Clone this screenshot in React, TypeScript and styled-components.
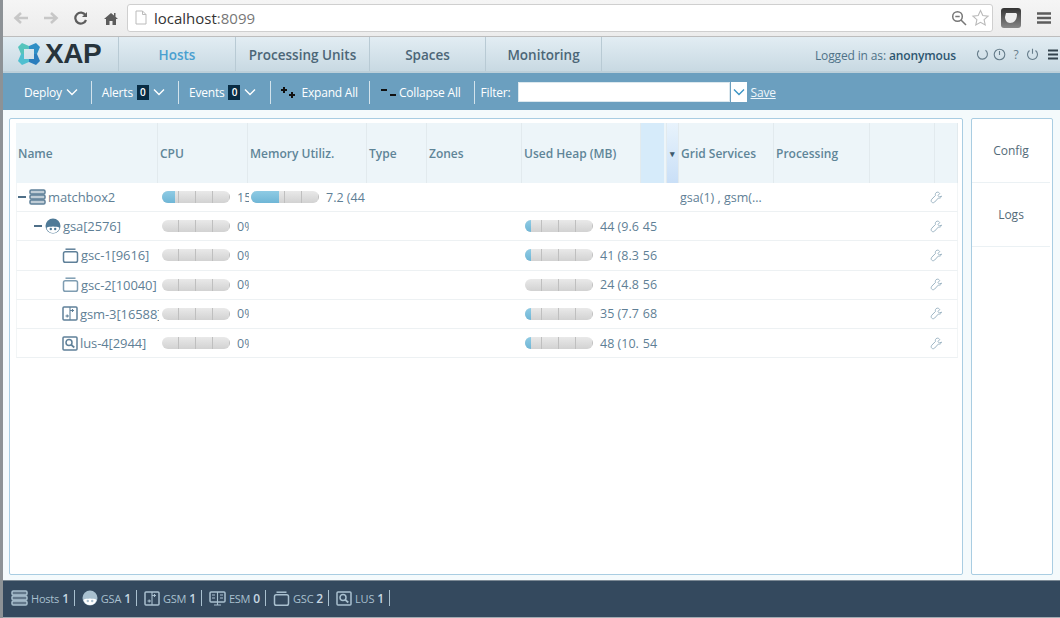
import React from "react";
import styled, { createGlobalStyle } from "styled-components";

const Global = createGlobalStyle`
  html, body { margin: 0; padding: 0; width: 1060px; height: 618px; overflow: hidden; background: #f4fafc; }
  body { font-family: "Open Sans", "Liberation Sans", sans-serif; }
  * { box-sizing: border-box; }
`;

const Page = styled.div`
  width: 1060px; height: 618px; display: flex; flex-direction: column;
  border-left: 3px solid #8d9296; background: #f4fafc; overflow: hidden;
`;

/* browser chrome */
const Chrome = styled.div`
  height: 37px; flex: none; display: flex; align-items: center; padding: 0 0 1px 10px;
  background: linear-gradient(#f5f5f5, #ececec); border-bottom: 1px solid #bdbdbd;
`;
const NavGroup = styled.div`display: flex; align-items: center; gap: 14px; width: 114px; flex: none;`;
const Address = styled.div`
  width: 866px; height: 28px; flex: none; display: flex; align-items: center; gap: 7px; padding: 0 2px 0 7px;
  background: #fff; border: 1px solid #cfcfcf; border-radius: 3px; font-size: 15px; color: #333;
`;
const Host = styled.span`flex: 1; span { color: #777; }`;
const AddressIcons = styled.div`display: flex; align-items: center; gap: 4px;`;
const ChromeRight = styled.div`display: flex; align-items: center; gap: 15px; margin-left: 8px;`;

/* app header */
const Header = styled.div`
  height: 36px; flex: none; display: flex; align-items: stretch;
  background: linear-gradient(#e2edf3, #c8d9e2); border-bottom: 2px solid #bccfd9;
`;
const Logo = styled.div`
  width: 115px; flex: none; display: flex; align-items: center; gap: 4px; padding-left: 14px;
  font: 700 28px/1 "Liberation Sans", sans-serif; letter-spacing: -0.5px; color: #27343c;
`;
const Tab = styled.div<{ $w: number; $active?: boolean }>`
  width: ${p => p.$w}px; flex: none; display: flex; align-items: center; justify-content: center; padding-top: 1px;
  border-left: 1px solid #b8cad4; font-size: 13.5px; font-weight: 600;
  color: ${p => (p.$active ? "#4a9fd0" : "#4c6677")};
`;
const TabEnd = styled.div`border-left: 1px solid #b8cad4; flex: 1; display: flex; align-items: center; justify-content: flex-end; padding-right: 2px; gap: 4px;`;
const Logged = styled.span`font-size: 12px; color: #4f7288; margin-right: 16px; letter-spacing: -0.13px; padding-top: 2px; b { font-weight: 600; color: #2d5670; }`;
const Qmark = styled.span`font-size: 12px; color: #667d8b; width: 12px; text-align: center;`;
const MenuIcon = styled.span`display: flex; margin-left: 5px;`;

/* toolbar */
const Toolbar = styled.div`
  height: 37px; flex: none; display: flex; align-items: center; padding: 1px 0 0 21px;
  background: #6b9fbf; color: #fff; font-size: 12px; letter-spacing: -0.2px;
`;
const Tool = styled.div<{ $gap?: number }>`display: flex; align-items: center; gap: ${p => p.$gap ?? 4}px; white-space: nowrap;`;
const Sep = styled.div<{ $l: number; $r: number }>`
  width: 1px; height: 23px; background: #d3e3ec; margin: 0 ${p => p.$r}px 0 ${p => p.$l}px; flex: none;
`;
const Badge = styled.span`
  background: #082c44; color: #fff; font-size: 10px; font-weight: 600; width: 12px; height: 15px;
  display: inline-flex; align-items: center; justify-content: center; letter-spacing: 0;
`;
const FilterInput = styled.div`width: 212px; height: 20px; background: #fff; border: 1px solid #dce8ee; margin-left: 7px; flex: none;`;
const FilterDrop = styled.div`
  width: 16px; height: 20px; background: #fff; flex: none; display: flex; align-items: center; justify-content: center; margin-left: 1px;
`;
const SaveLink = styled.span`text-decoration: underline; margin-left: 4px; color: #eef6fb;`;

/* main */
const Main = styled.div`
  flex: 1; min-height: 0; display: flex; gap: 8px; padding: 8px 7px 5px 6px;
`;
const Panel = styled.div`
  width: 954px; flex: none; background: #fff; border: 1px solid #a9cde2; border-radius: 2px; padding: 4px 4px 0 6px;
`;
const Side = styled.div`
  width: 82px; flex: none; background: #fff; border: 1px solid #a9cde2; border-radius: 2px; padding-right: 2px;
`;
const SideItem = styled.div`
  height: 64px; display: flex; align-items: center; justify-content: center; font-size: 12px; color: #536a78;
  border-bottom: 1px solid #ebf1f4; padding-bottom: 1px;
`;

const cols = "142px 90px 119px 60px 95px 119px 26px 12px 95px 96px 65px 23px";
const HeadRow = styled.div`
  display: grid; grid-template-columns: ${cols}; height: 60px; background: #edf5f9;
`;
const HeadCell = styled.div<{ $bg?: string; $sort?: boolean }>`
  display: flex; align-items: center; padding-left: ${p => (p.$sort ? 0 : 2)}px; justify-content: ${p => (p.$sort ? "center" : "flex-start")};
  font-size: ${p => (p.$sort ? 9 : 12)}px; font-weight: 600; color: ${p => (p.$sort ? "#3d5a6c" : "#5f8598")};
  background: ${p => p.$bg ?? "transparent"}; border-right: 1px solid #e2eaee; white-space: nowrap; overflow: hidden;
`;
const Row = styled.div`
  display: grid; grid-template-columns: ${cols}; height: 29.2px; border-bottom: 1px solid #edf1f3; border-left: 1px solid #f2f5f6;
  border-right: 1px solid #f2f5f6; font-size: 12.5px; color: #5f7f96; align-items: center;
`;
const NameCell = styled.div<{ $indent: number }>`
  grid-column: 1; display: flex; align-items: center; padding-left: ${p => p.$indent}px; white-space: nowrap; overflow: hidden;
  font-size: 13px; gap: 2px; height: 100%; letter-spacing: -0.1px;
`;
const Cell = styled.div<{ $col: number; $span?: number; $pad?: number }>`
  grid-column: ${p => p.$col} / span ${p => p.$span ?? 1}; display: flex; align-items: center; gap: 7px; white-space: nowrap; overflow: hidden;
  padding-left: ${p => p.$pad ?? 3}px; height: 100%;
`;
const Bar = styled.div<{ $w: number }>`
  width: ${p => p.$w}px; height: 12px; flex: none; border-radius: 6px; overflow: hidden;
  background:
    repeating-linear-gradient(90deg, transparent 0 16px, #bfbfbf 16px 17px),
    linear-gradient(#e9e9e9, #d2d2d2);
`;
const Fill = styled.div`
  height: 100%; background: linear-gradient(#8fcbe4, #6fb6d6);
`;
const HeapMax = styled.span`margin-left: -3px;`;
const Collapse = styled.span`width: 8px; height: 2px; background: #4f6f88; flex: none; margin-right: 1px;`;
const WrenchCell = styled.div`grid-column: 11 / span 2; display: flex; justify-content: flex-end; padding-right: 17px;`;

/* status bar */
const Status = styled.div`
  height: 38px; flex: none; display: flex; align-items: center; padding: 0 0 2px 8px; background: #34495e;
  color: #a9c0cf; font-size: 11px; letter-spacing: -0.2px; border-top: 1px solid #7d8a95; border-bottom: 1px solid #a3acb3;
`;
const StatusItem = styled.div`
  display: flex; align-items: center; gap: 3px; padding-right: 5px; margin-right: 7px; height: 16px; border-right: 1px solid #a9c0cf;
  b { font-weight: 600; color: #c6d7e2; font-size: 12px; }
`;

const Ic = ({ s = 16, c = "#5f8099", children, w }: { s?: number; c?: string; children: React.ReactNode; w?: number }) => (
  <svg width={w ?? s} height={s} viewBox={`0 0 ${w ?? s} ${s}`} fill="none" stroke={c} strokeWidth="1.5" style={{ flex: "none" }}>{children}</svg>
);

const ServerIcon = ({ c }: { c?: string }) => (
  <Ic s={16} w={17} c={c}>
    <rect x="1" y="1" width="15" height="4" rx="1.3" fill={c ?? "#5f8099"} fillOpacity=".4" />
    <rect x="1" y="6" width="15" height="4" rx="1.3" fill={c ?? "#5f8099"} fillOpacity=".4" />
    <rect x="1" y="11" width="15" height="4" rx="1.3" fill={c ?? "#5f8099"} fillOpacity=".4" />
  </Ic>
);
const GsaIcon = ({ c = "#4f7a97" }: { c?: string }) => (
  <svg width="16" height="16" viewBox="0 0 16 16" style={{ flex: "none" }}>
    <circle cx="8" cy="8" r="7.5" fill={c} />
    <path d="M1.500 10C3 8 5 9 8 8.500c3 .5 5-.5 6.500 1.500C13.500 13.500 11 15 8 15s-5.500-1.500-6.500-5z" fill="#fff" />
    <circle cx="5.800" cy="11" r="1.200" fill={c} />
    <circle cx="10.200" cy="11" r="1.200" fill={c} />
  </svg>
);
const GscIcon = ({ c }: { c?: string }) => (
  <Ic s={15} w={17} c={c}>
    <path d="M3.500 1.200h10" />
    <rect x="1.500" y="3.700" width="14" height="10.500" rx="1.800" />
  </Ic>
);
const GsmIcon = ({ c }: { c?: string }) => (
  <Ic s={15} w={16} c={c}>
    <rect x="1" y="1" width="14" height="13" rx="1" />
    <path d="M8 1v13M8.500 4.500h3.500M10.500 3v3M3.500 10h3.500M5.200 8.500v3" strokeWidth="1.100" />
  </Ic>
);
const LusIcon = ({ c }: { c?: string }) => (
  <Ic s={15} w={16} c={c}>
    <rect x="1" y="1" width="14" height="13" rx="1" />
    <circle cx="7" cy="6.500" r="3" />
    <path d="M9.300 8.800l3 2.700" strokeWidth="1.800" />
  </Ic>
);
const EsmIcon = ({ c }: { c?: string }) => (
  <Ic s={15} w={17} c={c}>
    <rect x="1" y="1" width="15" height="10" rx="1" />
    <path d="M8.500 1v13M5 14h7M3 4h3M3 7h3M11 4h3M11 7h3" strokeWidth="1.100" />
  </Ic>
);
const Wrench = () => (
  <svg width="12" height="13" viewBox="0 0 12 13" fill="none" stroke="#9db5c4" strokeWidth="1">
    <path d="M7 1.200C5.600 1.600 5 3 5.500 4.400L1.800 8.200c-.9 1-.8 2.200 0 3 .9.800 2.100.7 2.900-.2l3.600-3.900c1.500.4 3-.4 3.200-2L9.400 6 8 4.600 9.700 2.400C9 1.400 8 1 7 1.200z" />
  </svg>
);
const Chevron = ({ c = "#fff", s = 12 }: { c?: string; s?: number }) => (
  <svg width={s} height="8" viewBox="0 0 12 8" fill="none" stroke={c} strokeWidth="1.400" style={{ flex: "none" }}>
    <path d="M1 1.500l5 5 5-5" />
  </svg>
);
const LogoMark = () => (
  <svg width="24" height="24" viewBox="0 0 24 24" style={{ flex: "none" }}>
    <path d="M5 1l7 3v3H7v5H4L1 5z" fill="#55c4bd" />
    <path d="M19 1l-7 3v3h5v5h3l3-7z" fill="#2f8fc6" />
    <path d="M5 23l7-3v-3H7v-5H4l-3 7z" fill="#4fbfd0" />
    <path d="M19 23l-7-3v-3h5v-5h3l3 7z" fill="#2a7dbd" />
  </svg>
);

type R = {
  name: string; indent: number; icon: React.ReactNode; collapse?: boolean; cpu: number; cpuText: string;
  mem?: [number, string]; heap?: [number, string, string]; grid?: string;
};
const rows: R[] = [
  { name: "matchbox2", indent: 1, icon: <ServerIcon />, collapse: true, cpu: 13, cpuText: "15%", mem: [28, "7.2 (44"], grid: "gsa(1) , gsm(…" },
  { name: "gsa[2576]", indent: 17, icon: <GsaIcon />, collapse: true, cpu: 0, cpuText: "0%", heap: [6, "44 (9.6", "45"] },
  { name: "gsc-1[9616]", indent: 45, icon: <GscIcon />, cpu: 0, cpuText: "0%", heap: [6, "41 (8.3", "56"] },
  { name: "gsc-2[10040]", indent: 45, icon: <GscIcon c="#7f9db2" />, cpu: 0, cpuText: "0%", heap: [0, "24 (4.8", "56"] },
  { name: "gsm-3[16588]", indent: 45, icon: <GsmIcon />, cpu: 0, cpuText: "0%", heap: [6, "35 (7.7", "68"] },
  { name: "lus-4[2944]", indent: 45, icon: <LusIcon />, cpu: 0, cpuText: "0%", heap: [6, "48 (10.", "54"] },
];

const headers: { t: string; bg?: string; sort?: boolean }[] = [
  { t: "Name" }, { t: "CPU" }, { t: "Memory Utiliz." }, { t: "Type" }, { t: "Zones" }, { t: "Used Heap (MB)" },
  { t: "", bg: "linear-gradient(90deg, #d6ebfa 94%, #edf5f9 94%)" },
  { t: "▾", bg: "linear-gradient(#e8f3fc, #c9dff7)", sort: true },
  { t: "Grid Services" }, { t: "Processing" }, { t: "" }, { t: "" },
];

export default function App() {
  return (
    <>
      <Global />
      <Page>
        <Chrome>
          <NavGroup>
            <Ic s={14} w={16} c="#c7c7c7"><path d="M15 7H3M8 2L2.500 7 8 12" strokeWidth="2.600" /></Ic>
            <Ic s={14} w={16} c="#c7c7c7"><path d="M1 7h12M8 2l5.500 5L8 12" strokeWidth="2.600" /></Ic>
            <Ic s={14} w={16} c="#5c5c5c"><path d="M12.500 4.200A5.500 5.500 0 1 0 13 9" strokeWidth="2.200" /><path d="M14 1v5H9z" fill="#5c5c5c" stroke="none" /></Ic>
            <Ic s={14} w={16} c="#5c5c5c"><path d="M8 2L1 8h2v6h3.500V10h3v4H13V8h2l-2.500-2.200V2H11v2.400z" fill="#5c5c5c" stroke="none" /></Ic>
          </NavGroup>
          <Address>
            <Ic s={15} w={12} c="#bbb"><path d="M1 1h6.500L11 4.500V14H1zM7.500 1v3.500H11" strokeWidth="1" /></Ic>
            <Host>localhost<span>:8099</span></Host>
            <AddressIcons>
              <Ic s={16} c="#777"><circle cx="6.500" cy="6.500" r="4.800" /><path d="M4.300 6.500h4.400M10 10l5 5" /></Ic>
              <Ic s={18} w={19} c="#b9b9b9"><path d="M9.500 1.500l2.300 5 5.300.6-4 3.600 1.100 5.300L9.500 13.300 4.800 16l1.100-5.300-4-3.600 5.300-.6z" strokeWidth="1.100" /></Ic>
            </AddressIcons>
          </Address>
          <ChromeRight>
            <svg width="20" height="20" viewBox="0 0 20 20">
              <defs>
                <linearGradient id="ext" x1="0" y1="0" x2="0" y2="1"><stop offset="0" stopColor="#333" /><stop offset="1" stopColor="#888" /></linearGradient>
              </defs>
              <rect width="20" height="20" rx="3" fill="url(#ext)" />
              <path d="M5 5h10l1 1c0 6-3 9-7 9-3 0-5-3-5-6z" fill="#eee" />
            </svg>
            <Ic s={14} w={16} c="#5c5c5c"><path d="M1 2.500h14M1 7h14M1 11.500h14" strokeWidth="2.400" /></Ic>
          </ChromeRight>
        </Chrome>

        <Header>
          <Logo><LogoMark />XAP</Logo>
          <Tab $w={117} $active>Hosts</Tab>
          <Tab $w={134}>Processing Units</Tab>
          <Tab $w={116}>Spaces</Tab>
          <Tab $w={116}>Monitoring</Tab>
          <TabEnd>
            <Logged>Logged in as: <b>anonymous</b></Logged>
            <Ic s={13} w={13} c="#667d8b"><path d="M9.500 2.200A5 5 0 1 1 3 2.500" strokeWidth="1.100" /></Ic>
            <Ic s={13} w={13} c="#667d8b"><circle cx="6.500" cy="6.500" r="5.300" strokeWidth="1.100" /><path d="M6.500 3v4" strokeWidth="1.100" /></Ic>
            <Qmark>?</Qmark>
            <Ic s={13} w={13} c="#667d8b"><path d="M3.500 2.500a5 5 0 1 0 6 0M6.500 .8v5" strokeWidth="1.100" /></Ic>
            <MenuIcon><Ic s={11} w={10} c="#33424c"><path d="M0 1.500h10M0 5.500h10M0 9.500h10" strokeWidth="1.800" /></Ic></MenuIcon>
          </TabEnd>
        </Header>

        <Toolbar>
          <Tool>Deploy <Chevron /></Tool>
          <Sep $l={13} $r={10} />
          <Tool>Alerts <Badge>0</Badge> <Chevron /></Tool>
          <Sep $l={13} $r={10} />
          <Tool>Events <Badge>0</Badge> <Chevron /></Tool>
          <Sep $l={14} $r={9} />
          <Tool>
            <svg width="17" height="13" viewBox="0 0 17 13" fill="#111"><path d="M3 1h2v2h2v2H5v2H3V5H1V3h2zM11 6h2v2h2v2h-2v2h-2v-2H9V8h2z" /></svg>
            Expand All
          </Tool>
          <Sep $l={11} $r={10} />
          <Tool $gap={2}>
            <svg width="17" height="13" viewBox="0 0 17 13" fill="#111"><path d="M1 3h6v2H1zM10 8h6v2h-6z" /></svg>
            Collapse All
          </Tool>
          <Sep $l={13} $r={6} />
          <Tool>Filter:</Tool>
          <FilterInput />
          <FilterDrop><Chevron c="#3d95c4" s={12} /></FilterDrop>
          <SaveLink>Save</SaveLink>
        </Toolbar>

        <Main>
          <Panel>
            <HeadRow>
              {headers.map((h, i) => <HeadCell key={i} $bg={h.bg} $sort={h.sort}>{h.t}</HeadCell>)}
            </HeadRow>
            {rows.map(r => (
              <Row key={r.name}>
                <NameCell $indent={r.indent}>
                  {r.collapse && <Collapse />}
                  {r.icon}
                  {r.name}
                </NameCell>
                <Cell $col={2}>
                  <Bar $w={68}><Fill style={{ width: r.cpu }} /></Bar>
                  {r.cpuText}
                </Cell>
                {r.mem && (
                  <Cell $col={3} $pad={2}>
                    <Bar $w={68}><Fill style={{ width: r.mem[0] }} /></Bar>
                    {r.mem[1]}
                  </Cell>
                )}
                {r.heap && (
                  <Cell $col={6} $span={3} $pad={2}>
                    <Bar $w={68}><Fill style={{ width: r.heap[0] }} /></Bar>
                    <span>{r.heap[1]}</span>
                    <HeapMax>{r.heap[2]}</HeapMax>
                  </Cell>
                )}
                {r.grid && <Cell $col={9} $pad={0}>{r.grid}</Cell>}
                <WrenchCell><Wrench /></WrenchCell>
              </Row>
            ))}
          </Panel>
          <Side>
            <SideItem>Config</SideItem>
            <SideItem>Logs</SideItem>
          </Side>
        </Main>

        <Status>
          <StatusItem><ServerIcon c="#a9c0cf" />Hosts <b>1</b></StatusItem>
          <StatusItem><GsaIcon c="#a9c0cf" />GSA <b>1</b></StatusItem>
          <StatusItem><GsmIcon c="#a9c0cf" />GSM <b>1</b></StatusItem>
          <StatusItem><EsmIcon c="#a9c0cf" />ESM <b>0</b></StatusItem>
          <StatusItem><GscIcon c="#a9c0cf" />GSC <b>2</b></StatusItem>
          <StatusItem><LusIcon c="#a9c0cf" />LUS <b>1</b></StatusItem>
        </Status>
      </Page>
    </>
  );
}
